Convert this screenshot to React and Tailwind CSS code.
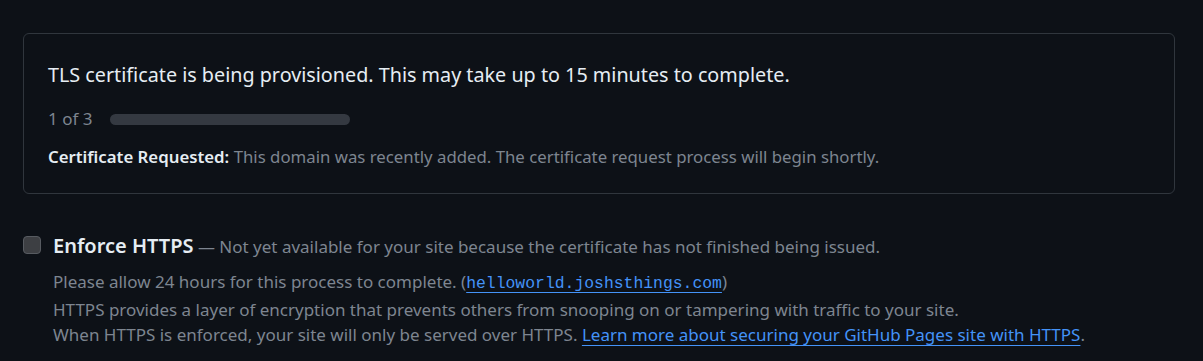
export default function App() {
  return (
    <div className="min-h-[361px] bg-[#0d1117] pt-[33px] pl-[23px] pr-[28px] font-['Noto_Sans',sans-serif] text-[#e6edf3]">
      {/* certificate status card */}
      <div className="rounded-md border border-[#30363d] px-6 pt-[26px] pb-[24px]">
        <p className="text-[19.75px] leading-[30px]">
          TLS certificate is being provisioned. This may take up to 15 minutes to complete.
        </p>
        <div className="mt-[17px] flex items-center gap-[18px] text-[17px] leading-6 text-[#7d8590]">
          <span>1 of 3</span>
          <div className="h-[11px] w-[240px] rounded-full bg-[#343941]"></div>
        </div>
        <p className="mt-[14px] text-[16.8px] leading-6 text-[#7d8590]">
          <strong className="font-semibold text-[#e6edf3]">Certificate Requested:</strong> This domain was recently
          added. The certificate request process will begin shortly.
        </p>
      </div>

      {/* enforce https */}
      <div className="mt-[39px] flex gap-3">
        <div className="mt-[3px] h-[18px] w-[18px] shrink-0 rounded-[4px] border border-[#575b61] bg-[#3d3f43]"></div>
        <div className="text-[17px] leading-[25.5px] text-[#7d8590]">
          <p className="leading-[26px]">
            <span className="text-[20px] font-semibold text-[#e6edf3]">Enforce HTTPS</span> — Not yet available for
            your site because the certificate has not finished being issued.
          </p>
          <p className="mt-[9px]">
            Please allow 24 hours for this process to complete. (
            <a href="#" className="font-['Liberation_Mono',monospace] text-[16.4px] text-[#4493f8] underline underline-offset-4">
              helloworld.joshsthings.com
            </a>
            )
          </p>
          <p>HTTPS provides a layer of encryption that prevents others from snooping on or tampering with traffic to your site.</p>
          <p>
            When HTTPS is enforced, your site will only be served over HTTPS.{" "}
            <a href="#" className="text-[#4493f8] underline underline-offset-4">
              Learn more about securing your GitHub Pages site with HTTPS
            </a>
            .
          </p>
        </div>
      </div>
    </div>
  );
}
